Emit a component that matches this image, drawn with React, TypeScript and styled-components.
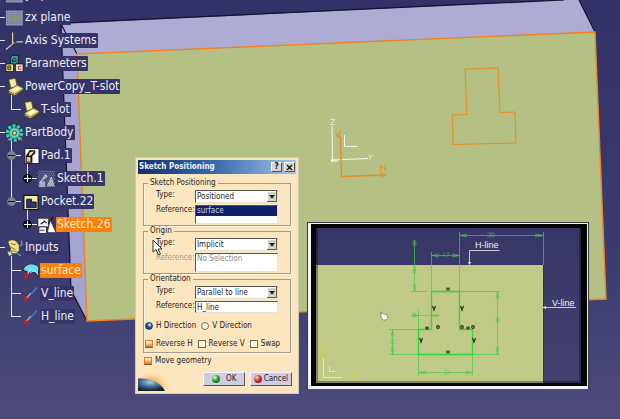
import React from "react";
import styled, { createGlobalStyle, css } from "styled-components";

const GlobalStyle = createGlobalStyle`
  * { box-sizing: border-box; }
  html, body { margin: 0; background: #48477a; }
  body { overflow: hidden; }
`;

const treeFont = '"DejaVu Sans Condensed", "DejaVu Sans", sans-serif';

/* ---------- 3D view ---------- */

const Viewport = styled.main`
  position: relative;
  min-height: 100vh;
  overflow: hidden;
  background: linear-gradient(#333268, #3c3b6f 60%, #4c4b7b);
  font-family: ${treeFont};
`;

const Model = styled.svg`
  position: absolute;
  inset: 0;
  width: 100%;
  height: 100%;
`;

function ModelDrawing() {
  return (
    <Model viewBox="0 0 620 419" preserveAspectRatio="xMinYMin slice" aria-hidden="true">
      <polygon points="61,24 564,0 579,0 595,32 77,54" fill="#aeacd4" />
      <polygon points="61,24 77,54 87,321 71,290" fill="#a5a3d0" />
      <path d="M62 23L564 0M579 0L595 32M77 54L61 24L71 290L87 321" fill="none" stroke="#14142a" strokeWidth="1.2" />
      <polygon points="77,54 595,32 606,299 87,321" fill="#b4c084" stroke="#f5821f" strokeWidth="1.4" />
      <path
        d="M465 69L498 68L500 112.500L515 112L516 143L453 144.500L452.500 115L467 114.500Z"
        fill="none"
        stroke="#ee8a24"
      />
      <g fill="none" stroke="#f4f6ea">
        <path d="M332 126L332.500 160L368 158.500" />
        <path d="M344.500 135V146.500H357.500" />
        <circle cx="332.500" cy="160" r="1.500" fill="#fff" />
        <path d="M330.500 119.500h4l-4 5h4M368.500 154.500l2 3l2.500-3M370.500 157.500l-1 3M334 162l3-2M335 160l3 2" strokeWidth=".8" />
      </g>
      <g fill="none" stroke="#ee8a24">
        <path d="M340.500 138L341.500 176.500L386 175" strokeWidth="1.300" />
        <path d="M335.500 131.500l2.500 6l3-8M337 134l4 4M380.500 164.500v7M385.500 164.500v7M380.500 168h5M380 173.500l6 1.500l-5 2" />
      </g>
    </Model>
  );
}

/* ---------- Specification tree ---------- */

const Branch = styled.ul<{ $root?: boolean }>`
  list-style: none;
  margin: 0;
  padding: 0;
  ${(p) =>
    p.$root
      ? css`
          position: relative;
          width: max-content;
          margin: -17px 0 0 -5px;
        `
      : css`
          margin-left: 16px;
          > li::before {
            content: "";
            position: absolute;
            left: 0;
            top: -3px;
            bottom: 3px;
            width: 1px;
            background: #e6e6ee;
          }
          > li:last-child::before {
            bottom: auto;
            height: 15px;
          }
        `}
`;

const Item = styled.li`
  position: relative;
`;

const Row = styled.div`
  display: flex;
  align-items: center;
  height: 23px;
`;

const Link = styled.span`
  position: relative;
  flex: none;
  width: 10px;
  height: 1px;
  background: #e6e6ee;
`;

const Toggle = styled.button<{ $dark?: boolean }>`
  position: absolute;
  left: -4px;
  top: -4px;
  width: 9px;
  height: 9px;
  padding: 0;
  border: 1px solid ${(p) => (p.$dark ? "#0c0c14" : "#77777f")};
  border-radius: 50%;
  background: ${(p) => (p.$dark ? "#0c0c14" : "#85858c")};
  svg {
    display: block;
    width: 7px;
    height: 7px;
  }
`;

const Glyph = styled.svg`
  flex: none;
  width: 19px;
  height: 20px;
`;

const Label = styled.span<{ $picked?: boolean }>`
  height: 15px;
  padding: 0 1px;
  border-radius: 1px;
  line-height: 15px;
  font-size: 12px;
  white-space: nowrap;
  color: ${(p) => (p.$picked ? "#ffe9c8" : "#eeeef4")};
  background: ${(p) => (p.$picked ? "#fb800f" : "#35346a")};
`;

type Kind =
  | "plane" | "axis" | "params" | "copy" | "body" | "pad"
  | "sketchHidden" | "pocket" | "sketch" | "inputs" | "surface" | "line";

const icons: Record<Kind, React.ReactNode> = {
  plane: (
    <>
      <rect x="1" y="2" width="18" height="16" fill="#777a9a" />
      <path d="M1 3h18M1 5h18M1 7h18M1 9h18M1 11h18M1 13h18M1 15h18M1 17h18" stroke="#b5b7c9" strokeDasharray="1 1" />
      <path d="M3 12l5-4h9l-4 4z" fill="#8f9468" />
    </>
  ),
  axis: <path d="M8 1v12M8 13l-7 6M8 12h2M12 11h7" fill="none" stroke="#d8d39c" strokeWidth="1.300" />,
  params: (
    <>
      <path d="M6 3l2-2h6v7l-1 2H6z" fill="#3e9c98" stroke="#111" strokeWidth=".8" />
      <path d="M8 8V5l2-1.500l1.500 1.500v3M8 7h3" fill="none" stroke="#0b2e38" />
      <path d="M1 11l1-1h7v8H1z" fill="#e9df7c" stroke="#111" strokeWidth=".8" />
      <path d="M3 12v4h3v-4zM3 14h3" fill="none" stroke="#3b3413" />
      <path d="M11 11l1-1h7v8h-8z" fill="#efe3d0" stroke="#111" strokeWidth=".8" />
      <path d="M17 12.500h-3v3h3" fill="none" stroke="#b02f2f" />
    </>
  ),
  copy: (
    <>
      <path d="M4 2l7-1l2 9l-7 1z" fill="#f4eb9b" stroke="#5a5320" strokeWidth=".8" />
      <path d="M4 13l9-5l6 3v2l-9 6l-6-3z" fill="#e8de7d" stroke="#4e4818" strokeWidth=".8" />
      <path d="M7 13l6-3l3 1.500l-6 3.500z" fill="#fffbd0" />
      <path d="M4 14.500l6 3l9-5.500" fill="none" stroke="#7b7430" />
    </>
  ),
  body: (
    <>
      <circle cx="10" cy="10" r="8" fill="none" stroke="#143d3f" strokeWidth="4" strokeDasharray="4 1.500" />
      <circle cx="10" cy="10" r="7.500" fill="none" stroke="#42c7b5" strokeWidth="3.500" strokeDasharray="3.200 1.500" />
      <circle cx="10" cy="10" r="5.500" fill="#69cfc2" stroke="#2a9f93" />
      <circle cx="10" cy="10" r="2.200" fill="#e9de52" stroke="#335a22" />
      <path d="M15 14l3 4M5 15l-2 3" stroke="#b9ab44" />
    </>
  ),
  pad: (
    <>
      <path d="M4 2h15v16H4z" fill="#f8f8fa" stroke="#0f0f24" />
      <path d="M5 10l4-6h6v3l-3 3v7H5z" fill="#101030" />
      <path d="M9 6l5-1l-3 4l-3 1z" fill="#f0e052" />
      <path d="M6 11h4v5H6z" fill="#e8cf42" />
    </>
  ),
  sketchHidden: (
    <>
      <path d="M2 2h17M1 4h18M2 6h17M1 8h18M2 10h17M1 12h18M2 14h17M1 16h18M2 18h17" stroke="#9c9db8" strokeDasharray="1 1" />
      <path d="M3 14l6-9l2 3M15 8l3 9h-7zM3 13h5v5H3z" fill="#a9aabf" stroke="#c9cadb" strokeDasharray="2 1" />
    </>
  ),
  pocket: (
    <>
      <path d="M3 3h15v15H3z" fill="#f5ec9f" stroke="#101020" strokeWidth="1.300" />
      <path d="M6 7h5v3h5v6H6z" fill="#343368" stroke="#1a1a38" />
    </>
  ),
  sketch: (
    <>
      <path d="M1 3h11v9H1z" fill="#f1f1f5" stroke="#1b1b2b" strokeWidth=".6" />
      <path d="M4 9l4-3l2 2M12 9l5-8" fill="none" stroke="#111" strokeWidth="1.200" />
      <path d="M14 5l6 13h-9z" fill="#fff" stroke="#1b1b2b" strokeWidth=".6" />
      <path d="M2 12h8v7H2z" fill="#f1f1f5" stroke="#111" strokeWidth=".8" />
      <path d="M3 15.500h5" stroke="#444" />
    </>
  ),
  inputs: (
    <>
      <path d="M3 4c2-4 8-3 10 0l2 3v6l-3 3H4l2-5z" fill="#efe08c" stroke="#433a16" strokeWidth=".8" />
      <path d="M6 5c3 2 5 2 6 0M6 9l5 3M5 14c3-2 5 0 8 0" fill="none" stroke="#86742f" />
      <path d="M2 14l4-1l2 4l-4 2z" fill="#c4ced0" stroke="#222" strokeWidth=".6" />
      <path d="M13 16l4 2M17 2l1 4l-2 2" stroke="#4e9fe0" strokeWidth="1.300" fill="none" />
    </>
  ),
  surface: (
    <>
      <path d="M2 9C4 2 13 0 19 6l-1 9c-3-5-6-5-9-3z" fill="#6cdcf0" stroke="#101c3a" />
      <path d="M10 12c3-3 6-2 8 2" stroke="#fff" fill="none" />
      <path d="M3 12l2 1l3-2v5l-3 3l-2-3z" fill="#b3212b" />
      <path d="M10 8l-3 5" stroke="#e9e9ef" />
    </>
  ),
  line: (
    <>
      <path d="M17 3L7 14" stroke="#3f7fc0" strokeWidth="1.500" />
      <path d="M3 12l2 1l3-2v5l-3 3l-2-3z" fill="#b3212b" />
      <path d="M10 9l-4 5" stroke="#d5d8e8" />
    </>
  ),
};

interface TreeNode {
  name: string;
  icon: Kind;
  toggle?: "open" | "closed";
  picked?: boolean;
  items?: TreeNode[];
}

const spec: TreeNode[] = [
  { name: "yz plane", icon: "plane" },
  { name: "zx plane", icon: "plane" },
  { name: "Axis Systems", icon: "axis" },
  { name: "Parameters", icon: "params" },
  { name: "PowerCopy_T-slot", icon: "copy", items: [{ name: "T-slot", icon: "copy" }] },
  {
    name: "PartBody",
    icon: "body",
    items: [
      { name: "Pad.1", icon: "pad", toggle: "open", items: [{ name: "Sketch.1", icon: "sketchHidden", toggle: "closed" }] },
      {
        name: "Pocket.22",
        icon: "pocket",
        toggle: "open",
        items: [{ name: "Sketch.26", icon: "sketch", toggle: "closed", picked: true }],
      },
    ],
  },
  {
    name: "Inputs",
    icon: "inputs",
    items: [
      { name: "surface", icon: "surface", picked: true },
      { name: "V_line", icon: "line" },
      { name: "H_line", icon: "line" },
    ],
  },
];

function Tree({ nodes, root }: { nodes: TreeNode[]; root?: boolean }) {
  return (
    <Branch $root={root}>
      {nodes.map((n) => (
        <Item key={n.name}>
          <Row>
            <Link>
              {n.toggle && (
                <Toggle $dark={n.toggle === "closed"} aria-label={`${n.toggle === "open" ? "Collapse" : "Expand"} ${n.name}`}>
                  <svg viewBox="0 0 7 7">
                    <path d={n.toggle === "open" ? "M0 3.500h7" : "M0 3.500h7M3.500 0v7"} stroke={n.toggle === "open" ? "#16161e" : "#fff"} />
                  </svg>
                </Toggle>
              )}
            </Link>
            <Glyph viewBox="0 0 20 20" aria-hidden="true">{icons[n.icon]}</Glyph>
            <Label $picked={n.picked}>{n.name}</Label>
          </Row>
          {n.items && <Tree nodes={n.items} />}
        </Item>
      ))}
    </Branch>
  );
}

/* ---------- Sketch Positioning dialog ---------- */

const Dialog = styled.form`
  position: absolute;
  left: 135px;
  top: 157px;
  width: 164px;
  display: flex;
  flex-direction: column;
  padding: 2px;
  border: 1px solid;
  border-color: #f2eee4 #77746e #77746e #f2eee4;
  background: #fbe6c0;
  outline: 1px solid #c9cdb4;
  outline-offset: -1px;
  color: #26221c;
  font: 8px/10px ${treeFont};
`;

const TitleBar = styled.header`
  display: flex;
  align-items: center;
  gap: 2px;
  height: 14px;
  padding: 0 1px;
  background: linear-gradient(90deg, #10306f, #3b6cab 50%, #a4c5ec);
`;

const Title = styled.h1`
  flex: 1;
  margin: 0;
  font-size: 8px;
  line-height: 14px;
  white-space: nowrap;
  color: #eef3fb;
`;

const TitleButton = styled.button`
  width: 11px;
  height: 10px;
  padding: 0;
  border: 1px solid;
  border-color: #fff #55524c #55524c #fff;
  background: #d8d3c8;
  color: #111;
  font: bold 8px/8px ${treeFont};
  svg {
    display: block;
    margin: 0 auto;
    width: 7px;
    height: 7px;
  }
`;

const Body = styled.div`
  display: flex;
  flex-direction: column;
  padding: 4px 5px 0;
`;

const Group = styled.fieldset`
  min-width: 0;
  margin: 0;
  padding: 2px 12px 1px 8px;
  border: 1px solid #a19c90;
  box-shadow: inset 1px 0 #fff6e2, 1px 1px #fff6e2;
`;

const Legend = styled.legend`
  margin-left: -4px;
  padding: 0 2px;
  line-height: 10px;
`;

const Fields = styled.div`
  display: grid;
  grid-template-columns: 43px 1fr;
  row-gap: 2px;
`;

const FieldLabel = styled.label<{ $off?: boolean }>`
  line-height: 9px;
  padding-left: 4px;
  white-space: nowrap;
  color: ${(p) => (p.$off ? "#a39b8c" : "#26221c")};
`;

const sunken = css`
  width: 100%;
  min-width: 0;
  margin: 0;
  border: 1px solid;
  border-color: #57544e #e8e2d4 #e8e2d4 #57544e;
  border-radius: 0;
  background: #fff;
  color: #26221c;
  font: 8px/10px ${treeFont};
`;

const SelectBox = styled.span`
  position: relative;
  display: block;
`;

const Select = styled.select`
  ${sunken}
  display: block;
  appearance: none;
  height: 13px;
  padding: 0 12px 0 1px;
`;

const Arrow = styled.svg`
  position: absolute;
  right: 1px;
  top: 1px;
  width: 10px;
  height: 11px;
  pointer-events: none;
`;

const TextInput = styled.input`
  ${sunken}
  height: 12px;
  padding: 0 1px;
`;

const List = styled.ul`
  ${sunken}
  height: 19px;
  padding: 0;
  list-style: none;
`;

const Option = styled.li<{ $on?: boolean }>`
  padding: 0 1px;
  line-height: 10px;
  color: ${(p) => (p.$on ? "#c7d2ee" : "#8d8d8d")};
  background: ${(p) => (p.$on ? "#0c2268" : "transparent")};
`;

const Choices = styled.div`
  display: flex;
  gap: 5px;
  margin: 7px -12px 0 -7px;
  &:last-child {
    margin-bottom: 2px;
  }
`;

const Choice = styled.label`
  display: flex;
  align-items: center;
  gap: 3px;
  line-height: 11px;
  white-space: nowrap;
`;

const MoveChoice = styled(Choice)`
  margin: 2px 0 0 1px;
`;

const Mark = styled.input`
  appearance: none;
  flex: none;
  width: 8px;
  height: 8px;
  margin: 0;
  border: 1px solid #6c6a54;
  background: #fffde6;
  &[type="radio"] {
    border-radius: 50%;
  }
  &[type="radio"]:checked {
    border-color: #203c68;
    background: radial-gradient(circle at 60% 30%, #bcd8f6 0 15%, #2a57a0 40%, #0d2350);
  }
  &[type="checkbox"]:checked {
    height: 7px;
    border-color: #d08136;
    background: linear-gradient(#ffe0b0 30%, #e88a2e);
    box-shadow: 0 1px #8a5a30;
  }
`;

const Footer = styled.footer`
  display: flex;
  align-items: flex-end;
  gap: 5px;
  padding-right: 4px;
`;

const Globe = styled.svg`
  flex: none;
  width: 36px;
  height: 25px;
  margin-right: auto;
`;

const Push = styled.button`
  display: flex;
  align-items: center;
  justify-content: space-evenly;
  width: 42px;
  height: 14px;
  margin-bottom: 5px;
  padding: 0 1px;
  border: 1px solid;
  border-color: #f4f2fa #55536e #55536e #f4f2fa;
  background: #cfcbe0;
  color: #26221c;
  font: 8px/10px ${treeFont};
`;

const Lamp = styled.span<{ $tone: "go" | "stop" }>`
  width: 8px;
  height: 8px;
  border-radius: 50%;
  background: ${(p) =>
    p.$tone === "go"
      ? "radial-gradient(circle at 35% 30%, #d8ffd0, #2ca032 45%, #0b4c12)"
      : "radial-gradient(circle at 35% 30%, #ffd8d0, #d23030 45%, #701010)"};
`;

function Combo({ id, value }: { id: string; value: string }) {
  return (
    <SelectBox>
      <Select id={id} defaultValue={value}>
        <option>{value}</option>
      </Select>
      <Arrow viewBox="0 0 10 11" aria-hidden="true">
        <path d="M0 0h10v11H0z" fill="#d8d3c8" />
        <path d="M.5 10.500V.5h9" fill="none" stroke="#fff" />
        <path d="M0 10.500h9.500V0" fill="none" stroke="#5b5850" />
        <path d="M2 4h6L5 7.500z" fill="#111" />
      </Arrow>
    </SelectBox>
  );
}

function PositioningDialog() {
  return (
    <Dialog aria-label="Sketch Positioning" onSubmit={(e) => e.preventDefault()}>
      <TitleBar>
        <Title>Sketch Positioning</Title>
        <TitleButton type="button" aria-label="Help">?</TitleButton>
        <TitleButton type="button" aria-label="Close">
          <svg viewBox="0 0 7 7"><path d="M1 1l5 5M6 1L1 6" stroke="#111" strokeWidth="1.300" /></svg>
        </TitleButton>
      </TitleBar>
      <Body>
        <Group>
          <Legend>Sketch Positioning</Legend>
          <Fields>
            <FieldLabel htmlFor="pos-type">Type:</FieldLabel>
            <Combo id="pos-type" value="Positioned" />
            <FieldLabel as="span" id="pos-ref">Reference:</FieldLabel>
            <List role="listbox" aria-labelledby="pos-ref" tabIndex={0}>
              <Option role="option" aria-selected $on>surface</Option>
            </List>
          </Fields>
        </Group>
        <Group>
          <Legend>Origin</Legend>
          <Fields>
            <FieldLabel htmlFor="org-type">Type:</FieldLabel>
            <Combo id="org-type" value="Implicit" />
            <FieldLabel as="span" $off id="org-ref">Reference:</FieldLabel>
            <List role="listbox" aria-labelledby="org-ref" aria-disabled>
              <Option role="option" aria-selected={false}>No Selection</Option>
            </List>
          </Fields>
        </Group>
        <Group>
          <Legend>Orientation</Legend>
          <Fields>
            <FieldLabel htmlFor="ori-type">Type:</FieldLabel>
            <Combo id="ori-type" value="Parallel to line" />
            <FieldLabel htmlFor="ori-ref">Reference:</FieldLabel>
            <TextInput id="ori-ref" defaultValue="H_line" />
          </Fields>
          <Choices>
            <Choice><Mark type="radio" name="dir" defaultChecked />H Direction</Choice>
            <Choice><Mark type="radio" name="dir" />V Direction</Choice>
          </Choices>
          <Choices>
            <Choice><Mark type="checkbox" defaultChecked />Reverse H</Choice>
            <Choice><Mark type="checkbox" />Reverse V</Choice>
            <Choice><Mark type="checkbox" />Swap</Choice>
          </Choices>
        </Group>
        <MoveChoice><Mark type="checkbox" defaultChecked />Move geometry</MoveChoice>
      </Body>
      <Footer>
        <Globe viewBox="0 0 36 26" preserveAspectRatio="none" aria-hidden="true">
          <defs>
            <radialGradient id="glow" cx=".35" cy=".8" r=".6">
              <stop offset=".3" stopColor="#f7a338" />
              <stop offset="1" stopColor="#fbe6c0" stopOpacity="0" />
            </radialGradient>
            <radialGradient id="earth" cx=".45" cy=".3" r=".7">
              <stop offset="0" stopColor="#a8d0ea" />
              <stop offset=".5" stopColor="#3f7098" />
              <stop offset="1" stopColor="#141c28" />
            </radialGradient>
          </defs>
          <path d="M0 0h36v26H0z" fill="url(#glow)" />
          <path d="M0 13c12-1 23 4 27 13H0z" fill="url(#earth)" />
        </Globe>
        <Push type="submit"><Lamp $tone="go" />OK</Push>
        <Push type="button"><Lamp $tone="stop" />Cancel</Push>
      </Footer>
    </Dialog>
  );
}

/* ---------- Sketch preview window ---------- */

const Preview = styled.figure`
  position: absolute;
  left: 307px;
  top: 222px;
  width: 282px;
  margin: 0;
  border: 1px solid #3a3a3c;
  border-width: 1px 1px 0 1px;
  background: #f4f4f6;
  padding: 1px 1px 3px 3px;
`;

const PreviewFrame = styled.div`
  padding: 4px 6px 3px 5px;
  background: #050505;
  svg {
    display: block;
    width: 100%;
  }
`;

const vertexMarks: [string, number, number][] = [
  ["H", 448, 289], ["H", 448, 352], ["V", 434, 308], ["V", 462, 308],
  ["V", 421, 340], ["V", 474, 340], ["H", 427, 328], ["H", 468, 328],
  ["O", 438, 327], ["O", 462, 327], ["O", 473, 327],
];

const markPath: Record<string, string> = {
  H: "M-1 -1.500v3M1 -1.500v3M-1.500 0h3",
  V: "M-1.500 -2L0 2L1.500 -2",
  O: "M-1.300 0a1.300 1.300 0 1 0 2.600 0a1.300 1.300 0 1 0 -2.600 0",
};

function SketchPreview() {
  return (
    <Preview>
      <PreviewFrame>
        <svg viewBox="316 228 265 155" role="img" aria-label="Sketch constraints preview">
          <defs>
            <linearGradient id="sky" x2="0" y2="1">
              <stop offset="0" stopColor="#373668" />
              <stop offset="1" stopColor="#43426f" />
            </linearGradient>
          </defs>
          <path d="M316 228h265v155H316z" fill="url(#sky)" />
          <path d="M316 265h227v118H316z" fill="#c0c987" />
          <path d="M543.500 265v118" stroke="#2b2b4c" strokeDasharray="2 1" />
          <path d="M316.500 383V228M316 382.500h265M580.500 383V228" fill="none" stroke="#000" opacity=".35" strokeWidth="3" />
          <path
            d="M431.500 291.500H459.500V329.500H472.500V354.500H418.500V329.500H431.500Z"
            fill="none"
            stroke="#2bd93a"
            strokeWidth="1.300"
          />
          <g fill="none" stroke="#3fcf46" strokeWidth=".7">
            <path d="M414.500 240V291M411 291.500h16M431.500 252v39M459.500 232v59M431.500 255.500h28M459.500 235.500h83.500M543.500 232v33" />
            <path d="M497.500 291.500v63M460 291.500h40M473 354.500h27M392.500 329.500v25M389 329.500h29M389 354.500h29" />
            <path d="M418.500 355v20M472.500 355v20M418.500 372.500h54M411 315.500h29M418.500 310v19" />
            <path d="M413 273l1.500-8l1.500 8M413 284l1.500 7l1.500-7M439 254l-7 1.500l7 1.500M452 254l7 1.500l-7 1.500M467 234l-7 1.500l7 1.500M535 234l8 1.500l-8 1.500" />
            <path d="M496 299l1.500-7l1.500 7M496 347l1.500 7l1.500-7M391 337l1.500-7l1.500 7M391 347l1.500 7l1.500-7M426 371l-7 1.500l7 1.500M465 371l7 1.500l-7 1.500M412 314l6 1.500l-6 1.500M438 314l-6 1.500l6 1.500" />
            <path
              d="M413 241h3v4h-3zM413 243h3M443 253h1v4M446 253h3l-2 4M487 233h3v4h-3M491 233h3v4h-3zM496 318h3v4h-3zM496 320h3M391 340h3v4h-3zM444 370h3v4h-3M449 370v4M413 313h2v4"
              strokeWidth=".5"
            />
          </g>
          {vertexMarks.map(([kind, x, y]) => (
            <path key={`${kind}${x}-${y}`} d={markPath[kind]} transform={`translate(${x} ${y})`} fill="none" stroke="#26331a" strokeWidth="1.200" />
          ))}
          <g fill="none" stroke="#eef0f2" strokeWidth=".8">
            <path d="M499.500 250.500H469.500V264M543 307.500H576" />
            <path d="M468 262h3l-1.500 3zM546 306v3l-3-1.500z" fill="#fff" stroke="none" />
            <path d="M323.500 358V377.500H342M329.500 366v5.500h6" />
          </g>
          <path d="M320.500 346l2 4l2-4M322.500 350v5M322.500 356v4M342 377.500h5M348 375l3 3M351 375l-3 3M352 375h3l-3 3h3" fill="none" stroke="#d5d918" strokeWidth=".8" />
          <path d="M381 312l3 2l3 1l1 3l-2 2h-3l-2-3zM380 313l2 1" fill="#fafafa" stroke="#74746a" strokeWidth=".7" />
          <g fill="#f0f1f5" fontFamily="Liberation Sans, Arial, sans-serif" fontSize="9">
            <text x="475" y="248">H-line</text>
            <text x="552" y="306">V-line</text>
          </g>
        </svg>
      </PreviewFrame>
    </Preview>
  );
}

const Pointer = styled.svg`
  position: absolute;
  left: 152px;
  top: 239px;
  width: 11px;
  height: 17px;
  pointer-events: none;
`;

export default function App() {
  return (
    <>
      <GlobalStyle />
      <Viewport>
        <ModelDrawing />
        <Tree nodes={spec} root />
        <PositioningDialog />
        <SketchPreview />
        <Pointer viewBox="0 0 11 17" aria-hidden="true">
          <path d="M1 1v12l3-2.500l2.500 5.500l2-1l-2.500-5h4z" fill="#fff" stroke="#33312c" />
        </Pointer>
      </Viewport>
    </>
  );
}
